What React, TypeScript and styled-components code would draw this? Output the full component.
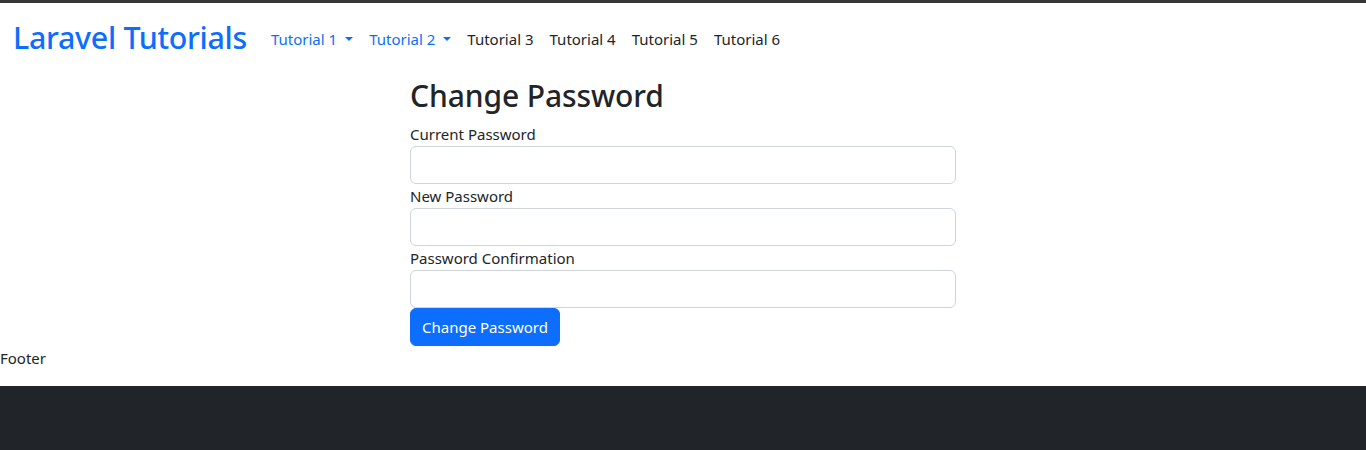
import React from "react";
import styled, { createGlobalStyle } from "styled-components";

const Global = createGlobalStyle`
  html { background: #212529; }
  body {
    margin: 0;
    font-family: "Noto Sans", "Open Sans", "Liberation Sans", sans-serif;
    font-size: 16px;
    line-height: 1.5;
    color: #212529;
  }
  * { box-sizing: border-box; }
`;

const Page = styled.div`
  background: #fff;
  border-top: 3px solid #353535;
`;

const Navbar = styled.nav`
  display: flex;
  align-items: center;
  padding: 10px 13px 11px;
  height: 73px;
`;

const Brand = styled.a`
  font-size: 30.4px;
  font-weight: 500;
  line-height: 38px;
  color: #0d6efd;
  text-decoration: none;
  margin-right: 16px;
  margin-top: -3px;
  letter-spacing: -0.3px;
`;

const NavList = styled.ul`
  display: flex;
  list-style: none;
  margin: 0;
  padding: 0;
`;

const NavLink = styled.a<{ $toggle?: boolean }>`
  display: flex;
  align-items: center;
  padding: 8px 8px;
  color: ${(p) => (p.$toggle ? "#0d6efd" : "#212529")};
  text-decoration: none;
  font-size: 15px;
  &::after {
    content: ${(p) => (p.$toggle ? '""' : "none")};
    display: inline-block;
    margin-left: 8px;
    border-top: 4.8px solid currentColor;
    border-left: 4.8px solid transparent;
    border-right: 4.8px solid transparent;
  }
`;

const Main = styled.main`
  width: 546px;
  margin: 0 auto;
`;

const Title = styled.h2`
  margin: 1px 0 7px;
  font-size: 30px;
  font-weight: 500;
  line-height: 38px;
  letter-spacing: -0.1px;
`;

const Form = styled.form`
  display: flex;
  flex-direction: column;
`;

const Label = styled.label`
  display: block;
  font-size: 15px;
  line-height: 24px;
`;

const Input = styled.input`
  display: block;
  width: 100%;
  height: 38px;
  padding: 6px 12px;
  font-size: 16px;
  border: 1px solid #ced4da;
  border-radius: 6px;
  background: #fff;
`;

const Button = styled.button`
  align-self: flex-start;
  height: 38px;
  padding: 6px 11px;
  white-space: nowrap;
  font-family: inherit;
  font-size: 15px;
  color: #fff;
  background: #0d6efd;
  border: 1px solid #0d6efd;
  border-radius: 6px;
`;

const Footer = styled.footer`
  padding-bottom: 16px;
  font-size: 15px;
  line-height: 24px;
`;

export default function App() {
  return (
    <>
      <Global />
      <Page>
        <Navbar>
          <Brand href="#">Laravel Tutorials</Brand>
          <NavList>
            <li><NavLink href="#" $toggle>Tutorial 1</NavLink></li>
            <li><NavLink href="#" $toggle>Tutorial 2</NavLink></li>
            <li><NavLink href="#">Tutorial 3</NavLink></li>
            <li><NavLink href="#">Tutorial 4</NavLink></li>
            <li><NavLink href="#">Tutorial 5</NavLink></li>
            <li><NavLink href="#">Tutorial 6</NavLink></li>
          </NavList>
        </Navbar>
        <Main>
          <Title>Change Password</Title>
          <Form onSubmit={(e) => e.preventDefault()}>
            <Label>Current Password</Label>
            <Input type="password" />
            <Label>New Password</Label>
            <Input type="password" />
            <Label>Password Confirmation</Label>
            <Input type="password" />
            <Button type="submit">Change Password</Button>
          </Form>
        </Main>
        <Footer>Footer</Footer>
      </Page>
    </>
  );
}
